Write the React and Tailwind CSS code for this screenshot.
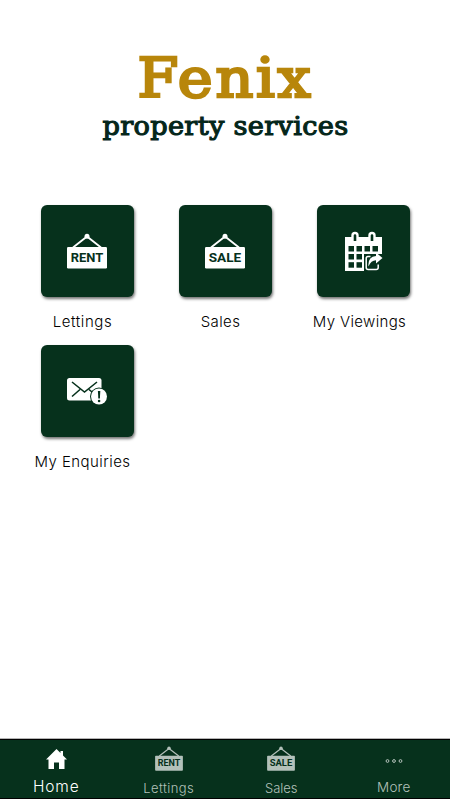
import React from 'react';

const SignIcon = ({ text, className }) => (
  <svg viewBox="0 0 40 36" className={className}>
    <path d="M6 14.5 L20 3.5 L34 14.5" fill="none" stroke="currentColor" strokeWidth="1.8" />
    <circle cx="20" cy="3.2" r="2.5" fill="currentColor" />
    <rect x="0" y="14" width="40" height="21.5" rx="1.2" fill="currentColor" />
    <text
      x="20"
      y="29.4"
      textAnchor="middle"
      textLength="32.5"
      lengthAdjust="spacingAndGlyphs"
      fontFamily="Roboto, 'Liberation Sans', sans-serif"
      fontWeight="700"
      fontSize="13.4"
      fill="#06311c"
    >
      {text}
    </text>
  </svg>
);

const CalendarIcon = () => (
  <svg viewBox="0 0 38 42" className="ml-0.5 h-[42px] w-[38px]">
    <path d="M0 7h37v17H19v17H0z" fill="#fff" />
    <path d="M7.5 11V5.5q0-2.5 2.5-2.5t2.5 2.5V11M24.5 11V5.5q0-2.5 2.5-2.5t2.5 2.5V11" fill="#06311c" stroke="#fff" strokeWidth="2.4" />
    <g fill="#06311c">
      <rect x="3.5" y="16" width="5.5" height="5.5" />
      <rect x="11.5" y="16" width="5.5" height="5.5" />
      <rect x="19.5" y="16" width="5.5" height="5.5" />
      <rect x="27.5" y="16" width="5.5" height="5.5" />
      <rect x="3.5" y="24" width="5.5" height="5.5" />
      <rect x="11.5" y="24" width="5.5" height="5.5" />
      <rect x="3.5" y="32.2" width="5.5" height="5.5" />
      <rect x="11.5" y="32.2" width="5.5" height="5.5" />
    </g>
    <path d="M25.5 26.5H23q-1.8 0-1.8 2v9q0 2 2 2h8q2 0 2-2v-3" fill="none" stroke="#fff" strokeWidth="1.5" />
    <path d="M23.5 36.5q-1-9.500 7.500-10.500v-3.500l6.500 5.500-6.500 5.500v-3.200q-5 0-7.500 6.200z" fill="#fff" />
  </svg>
);

const EnquiryIcon = () => (
  <svg viewBox="0 0 41 28" className="h-7 w-[41px]">
    <rect x="0" y="1" width="34.5" height="22.5" rx="2.5" fill="#fff" />
    <path d="M5 5l12.5 10L30 5M5 19.500l8-7M22 12.500l6 5" fill="none" stroke="#06311c" strokeWidth="1.6" />
    <circle cx="32" cy="19.5" r="9" fill="#06311c" />
    <circle cx="32" cy="19.5" r="8" fill="#fff" />
    <path d="M30.900 14h2.400l-.4 7.400h-1.600z" fill="#06311c" />
    <circle cx="32.1" cy="24" r="1.3" fill="#06311c" />
  </svg>
);

const HomeIcon = () => (
  <svg viewBox="0 0 21 20" className="h-5 w-[21px]">
    <path d="M10.5 0L14.5 4V2H17v4.500L21 10.500h-2.500V20H13v-6.500H8V20H2.500v-9.500H0z" fill="#fff" />
  </svg>
);

const MoreIcon = () => (
  <svg viewBox="0 0 18 6" className="mt-1 h-1.5 w-[18px]" fill="none" stroke="currentColor" strokeWidth="1">
    <circle cx="2.5" cy="3" r="1.4" />
    <circle cx="9" cy="3" r="1.4" />
    <circle cx="15.5" cy="3" r="1.4" />
  </svg>
);

const Logo = () => (
  <svg viewBox="0 0 250 110" className="h-[110px] w-[250px] overflow-visible" fontFamily="'DejaVu Serif', serif">
    <text
      x="37.5"
      y="57"
      fontSize="54"
      letterSpacing="2.5"
      fill="#b8860b"
      stroke="#b8860b"
      strokeWidth="2.6"
      textLength="176"
      lengthAdjust="spacingAndGlyphs"
    >
      Fenix
    </text>
    <text
      x="2.5"
      y="95"
      fontSize="25.5"
      letterSpacing="0.3"
      fill="#04261a"
      stroke="#04261a"
      strokeWidth="1.1"
      textLength="246"
      lengthAdjust="spacingAndGlyphs"
    >
      property services
    </text>
  </svg>
);

const Tile = ({ icon, label, labelClass }) => (
  <div className="flex h-[140px] flex-col items-center">
    <div className="flex h-[92px] w-[93px] items-center justify-center rounded-md bg-[#06311c] text-white shadow-[1px_2px_3px_rgba(0,0,0,0.55)]">
      {icon}
    </div>
    <p className={`mt-[15px] pr-[9px] text-[15px] leading-5 font-light whitespace-nowrap text-black ${labelClass}`}>{label}</p>
  </div>
);

const NavItem = ({ icon, label, active, labelClass }) => (
  <div className={`flex flex-1 flex-col items-center ${active ? 'text-white' : 'text-[#b3c1ba]'}`}>
    <div className="flex h-[37px] items-center">{icon}</div>
    <span className={`leading-5 ${labelClass}`}>{label}</span>
  </div>
);

const App = () => {
  return (
    <div className="flex h-[800px] w-[450px] flex-col bg-white font-['Inter','Liberation_Sans',sans-serif]">
      <header className="flex h-[205px] justify-center pt-10">
        <Logo />
      </header>

      <main className="grid flex-1 grid-cols-3 content-start px-[18px]">
        <Tile
          label="Lettings"
          labelClass="tracking-[0.6px]"
          icon={<SignIcon text="RENT" className="h-9 w-10" />}
        />
        <Tile
          label="Sales"
          labelClass="tracking-[0.4px]"
          icon={<SignIcon text="SALE" className="h-9 w-10" />}
        />
        <Tile label="My Viewings" labelClass="tracking-[0.35px] -mr-0.5" icon={<CalendarIcon />} />
        <Tile label="My Enquiries" labelClass="tracking-[0.45px]" icon={<EnquiryIcon />} />
      </main>

      {/* Bottom tab bar */}
      <nav className="mb-px flex h-[61px] border-t border-[#b5b5b5]">
        <div className="flex flex-1 border-y border-black bg-[#06311c]">
          <NavItem active label="Home" labelClass="text-[15.5px] tracking-[0.8px] font-light" icon={<HomeIcon />} />
          <NavItem
            label="Lettings"
            labelClass="text-[13px] tracking-[0.4px] pt-px font-light"
            icon={<SignIcon text="RENT" className="h-[25px] w-7" />}
          />
          <NavItem
            label="Sales"
            labelClass="text-[13px] pt-px font-light"
            icon={<SignIcon text="SALE" className="h-[25px] w-7" />}
          />
          <NavItem label="More" labelClass="text-[13.5px] tracking-[0.2px] font-light" icon={<MoreIcon />} />
        </div>
      </nav>
    </div>
  );
};

export default App;
